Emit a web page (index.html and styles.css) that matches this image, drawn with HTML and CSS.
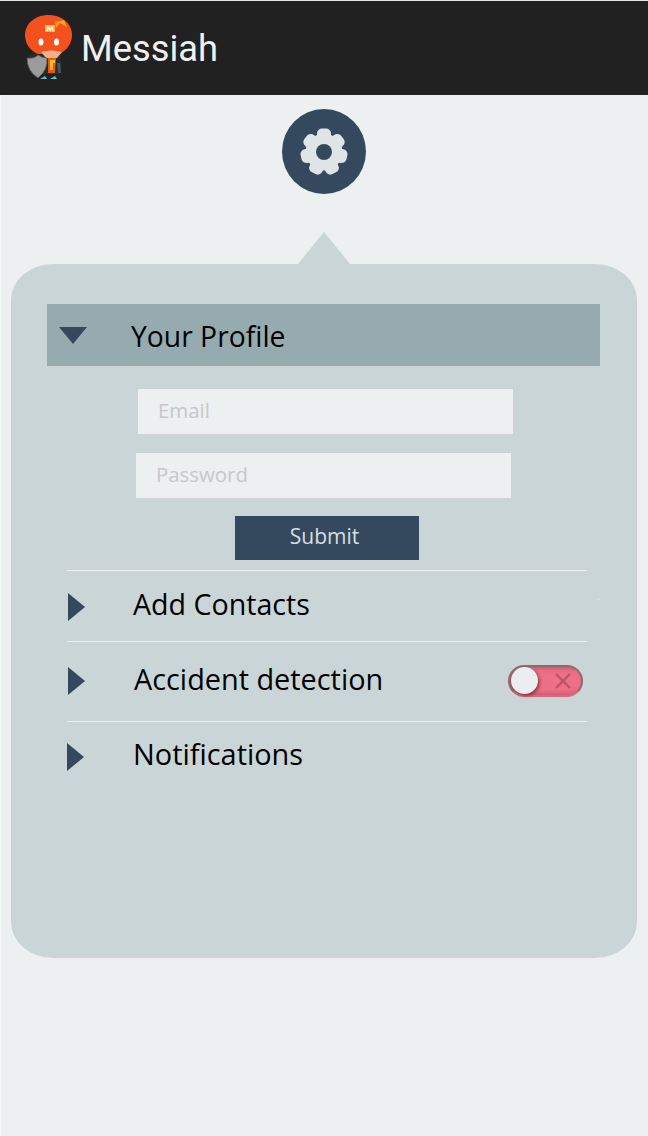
FILE: index.html
```html
<!DOCTYPE html>
<html lang="en">
<head>
<meta charset="utf-8">
<title>Messiah</title>
<link rel="stylesheet" href="styles.css">
</head>
<body>
<header class="appbar">
  <svg class="logo" width="50" height="68" viewBox="0 0 50 68">
    <path d="M3 41l17-4 18 1-1 6 1 8-2 8H16z" fill="#2a2a2a"/>
    <path d="M24.500 1C37.500 1 48 9.500 48 21c0 9-6 16-13 19H14C6.500 37 1 30 1 21 1 9.500 11.500 1 24.500 1z" fill="#f4511e"/>
    <path d="M31 8l9-2 3 7-7-4-4 5z" fill="#f6a21e"/>
    <path d="M21 11h10v7H21z" fill="#ffb53a"/>
    <path d="M23 17l1-4 2 3 2-3 1 4" stroke="#fff" stroke-width="1.300" fill="none"/>
    <ellipse cx="17" cy="28" rx="2.500" ry="3.600" fill="#fff"/>
    <ellipse cx="32.500" cy="28" rx="2.500" ry="3.600" fill="#fff"/>
    <path d="M17 38q10-3 21 0l-5 6H22z" fill="#f0b08a"/>
    <path d="M24 44h8l-1 15h-7z" fill="#e8590c"/>
    <path d="M26 46h5v3h-2v7h-3z" fill="#f6b73c"/>
    <path d="M33 49h3l1 10h-3z" fill="#46565f"/>
    <path d="M3 44q7 1 11-3 4 3 9 3 1 12-9 20Q3 57 3 44z" fill="#9b9b9b" stroke="#5a5a5a" stroke-width=".8"/>
    <path d="M16 65l5-3 2 3zM26 65l5-3 2 3z" fill="#56c3c1"/>
  </svg>
  <h1 class="title">Messiah</h1>
</header>
<main class="content">
  <button class="settings" type="button" aria-label="Settings">
    <svg width="48" height="48" viewBox="-24 -24 48 48">
      <circle r="18.500" class="tooth"/>
      <rect class="tooth" x="-7" y="-23.500" width="14" height="12" rx="5"/>
      <rect class="tooth" x="-7" y="-23.500" width="14" height="12" rx="5" transform="rotate(51.430)"/>
      <rect class="tooth" x="-7" y="-23.500" width="14" height="12" rx="5" transform="rotate(102.860)"/>
      <rect class="tooth" x="-7" y="-23.500" width="14" height="12" rx="5" transform="rotate(154.290)"/>
      <rect class="tooth" x="-7" y="-23.500" width="14" height="12" rx="5" transform="rotate(205.710)"/>
      <rect class="tooth" x="-7" y="-23.500" width="14" height="12" rx="5" transform="rotate(257.140)"/>
      <rect class="tooth" x="-7" y="-23.500" width="14" height="12" rx="5" transform="rotate(308.570)"/>
      <circle r="8" fill="#34495e"/>
    </svg>
  </button>
  <section class="panel">
    <div class="profile-head">
      <span class="arrow-down"></span>
      <h2 class="row-label">Your Profile</h2>
    </div>
    <form class="profile-form">
      <div class="field field-email">Email</div>
      <div class="field field-password">Password</div>
      <button class="submit" type="button">Submit</button>
    </form>
    <ul class="menu">
      <li class="menu-item item-contacts"><span class="arrow-right"></span><span class="row-label">Add Contacts</span></li>
      <li class="menu-item item-accident"><span class="arrow-right"></span><span class="row-label">Accident detection</span>
        <span class="toggle">
          <span class="knob"></span>
          <svg class="cross" width="18" height="18" viewBox="0 0 18 18"><path d="M2 2l14 14M16 2L2 16" stroke="#bb5268" stroke-width="2.400" fill="none"/></svg>
        </span>
      </li>
      <li class="menu-item item-notify"><span class="arrow-right"></span><span class="row-label">Notifications</span></li>
    </ul>
  </section>
</main>
</body>
</html>
```

FILE: styles.css
```css
* { box-sizing: border-box; }
html, body { margin: 0; padding: 0; }
body {
  width: 648px;
  height: 1136px;
  overflow: hidden;
  background: #ecf0f1;
  font-family: "Open Sans", "Noto Sans", sans-serif;
}
.appbar {
  height: 95px;
  background: #212121;
  border-top: 1px solid #e6e6e6;
  display: flex;
  align-items: center;
  padding-left: 24px;
  gap: 7px;
}
.logo { flex: none; margin-top: -1px; }
.title {
  margin: 0;
  font: 400 36.300px Roboto, sans-serif;
  color: #f1f1f1;
}
.tooth { fill: #dfe4e7; }
.content {
  display: flex;
  flex-direction: column;
  align-items: center;
  min-height: 1041px;
  padding: 14px 1px 0 0;
  border-left: 1px solid #f8fafa;
}
.settings {
  width: 84px;
  height: 85px;
  border: 0;
  padding: 0;
  border-radius: 50%;
  background: #34495e;
  display: flex;
  align-items: center;
  justify-content: center;
}
.panel {
  position: relative;
  width: 626px;
  height: 694px;
  margin-top: 70px;
  padding: 40px 0 0 36px;
  background: #cad5d7;
  border-radius: 42px / 36px;
}
.panel::before {
  content: "";
  position: absolute;
  left: 287px;
  top: -32px;
  border-left: 26px solid transparent;
  border-right: 26px solid transparent;
  border-bottom: 32px solid #cad5d7;
}
.panel::after {
  content: "";
  position: absolute;
  left: 587px;
  top: 335px;
  width: 1px;
  height: 1px;
  background: #ecf0f1;
}
.profile-head {
  width: 553px;
  height: 62px;
  background: #96abb0;
  display: flex;
  align-items: center;
  padding-left: 12px;
}
.row-label {
  margin: 0;
  font-family: "Open Sans", sans-serif;
  font-size: 28.600px;
  font-weight: 400;
  color: #000;
}
.profile-head .row-label { margin-left: -1px; padding-top: 2px; font-size: 28.300px; }
.arrow-down {
  width: 0;
  height: 0;
  margin-right: 45px;
  border-left: 14px solid transparent;
  border-right: 14px solid transparent;
  border-top: 17px solid #34495e;
}
.profile-form {
  display: flex;
  flex-direction: column;
  margin-top: 23px;
}
.field {
  width: 375px;
  height: 45px;
  background: #ecf0f1;
  color: #c4c8cb;
  font-size: 20.400px;
  line-height: 43px;
  padding-left: 20px;
}
.field-email { margin-left: 91px; }
.field-password { margin-left: 89px; margin-top: 19px; }
.submit {
  width: 184px;
  height: 44px;
  margin: 18px 0 0 188px;
  border: 0;
  padding: 0 5px 4px 0;
  background: #34495e;
  color: #d9dee1;
  font-family: "Open Sans", sans-serif;
  font-size: 21px;
}
.menu {
  list-style: none;
  margin: 10px 0 0 20px;
  padding: 0;
  width: 520px;
}
.menu-item {
  display: flex;
  align-items: center;
  border-top: 1px solid #ecf0f1;
}
.menu-item .row-label { padding-bottom: 5px; }
.item-contacts { height: 71px; }
.item-accident { height: 80px; }
.item-accident .row-label { padding-bottom: 7px; margin-left: 1px; font-size: 28.850px; }
.item-notify { height: 70px; }
.item-notify .row-label { padding-bottom: 6px; font-size: 28.900px; }
.arrow-right {
  width: 0;
  height: 0;
  margin: 1px 48px 0 1px;
  border-top: 14px solid transparent;
  border-bottom: 14px solid transparent;
  border-left: 17px solid #34495e;
}
.item-accident .arrow-right { margin-top: 0; margin-bottom: 1px; }
.item-notify .arrow-right { margin-left: 0; margin-right: 49px; }
.toggle {
  position: relative;
  margin-left: auto;
  margin-right: 4px;
  margin-bottom: 2px;
  width: 75px;
  height: 32px;
  border-radius: 16px;
  background: #ee7088;
  border: 2px solid #8d6a6a;
  border-bottom-color: #e0647c;
  box-shadow: inset 5px 0 6px #a84a5f;
  display: flex;
  align-items: center;
  justify-content: flex-end;
  padding-right: 9px;
}
.knob {
  position: absolute;
  left: 1px;
  top: 0;
  width: 27px;
  height: 27px;
  border-radius: 50%;
  background: #ecedf0;
  box-shadow: 2px 2px 3px rgba(80, 20, 30, .5);
}
```
